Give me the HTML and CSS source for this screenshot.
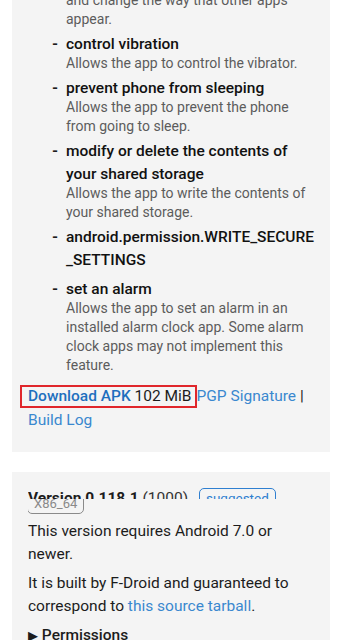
FILE: index.html
```html
<!DOCTYPE html>
<html>
<head>
<meta charset="utf-8">
<link rel="stylesheet" href="styles.css">
</head>
<body>
<div class="page">
  <section class="card card-first">
    <ul class="perms">
      <li class="perm perm-cut">
        <span class="dash"></span>
        <div class="perm-body">
          <p class="perm-desc">and change the way that other apps appear.</p>
        </div>
      </li>
      <li class="perm">
        <span class="dash">-</span>
        <div class="perm-body">
          <p class="perm-title">control vibration</p>
          <p class="perm-desc">Allows the app to control the vibrator.</p>
        </div>
      </li>
      <li class="perm">
        <span class="dash">-</span>
        <div class="perm-body">
          <p class="perm-title">prevent phone from sleeping</p>
          <p class="perm-desc">Allows the app to prevent the phone from going to sleep.</p>
        </div>
      </li>
      <li class="perm">
        <span class="dash">-</span>
        <div class="perm-body">
          <p class="perm-title">modify or delete the contents of your shared storage</p>
          <p class="perm-desc">Allows the app to write the contents of your shared storage.</p>
        </div>
      </li>
      <li class="perm perm-solo">
        <span class="dash">-</span>
        <div class="perm-body">
          <p class="perm-title break">android.permission.WRITE_SECURE_SETTINGS</p>
        </div>
      </li>
      <li class="perm">
        <span class="dash">-</span>
        <div class="perm-body">
          <p class="perm-title">set an alarm</p>
          <p class="perm-desc">Allows the app to set an alarm in an installed alarm clock app. Some alarm clock apps may not implement this feature.</p>
        </div>
      </li>
    </ul>
    <p class="downloads"><span class="apk-box"><a class="apk-link">Download APK</a> 102 MiB</span><a class="link">PGP Signature</a> | <a class="link">Build Log</a></p>
  </section>

  <section class="card">
    <div class="version-head">
      <span class="version-name">Version 0.118.1</span> <span class="version-code">(1000)</span>
      <span class="badge badge-suggested">suggested</span>
    </div>
    <div class="arch-row">
      <span class="badge badge-arch">X86_64</span>
    </div>
    <p class="text">This version requires Android 7.0 or newer.</p>
    <p class="text">It is built by F-Droid and guaranteed to correspond to <a class="link">this source tarball</a>.</p>
    <p class="text summary"><span class="tri">▶</span> Permissions</p>
  </section>
</div>
</body>
</html>
```

FILE: styles.css
```css
* { box-sizing: border-box; }
html, body { margin: 0; padding: 0; background: #ffffff; }
body {
  font-family: Roboto, "Noto Sans", sans-serif;
  color: #1c1c1c;
  width: 340px;
  height: 640px;
  overflow: hidden;
}
.page {
  display: flex;
  flex-direction: column;
  gap: 20px;
  padding: 0 10px 0 12px;
  margin-top: -21px;
}
.card {
  background: #f4f4f4;
  padding: 16px 16px 20px 16px;
}
.card-first { padding-top: 12px; }
.perms {
  list-style: none;
  margin: 0;
  padding: 0 0 0 24px;
  display: flex;
  flex-direction: column;
  gap: 4px;
}
.perm { display: flex; }
.perm-solo { margin-bottom: 2px; }
.dash {
  flex: 0 0 14px;
  font-weight: 700;
  font-size: 15.5px;
  line-height: 23px;
}
.perm-body { flex: 1; min-width: 0; }
.perm-title {
  margin: 0;
  font-size: 15.5px;
  font-weight: 500;
  line-height: 23px;
  color: #111;
}
.perm-title + .perm-desc { margin-top: -2px; }
.break { word-break: break-all; }
.perm-desc {
  margin: 0;
  font-size: 14px;
  line-height: 19px;
  color: #5c5c5c;
}
.downloads {
  margin: 9px 0 0 0;
  font-size: 15.5px;
  line-height: 24px;
  color: #1c1c1c;
}
.apk-box {
  border: 2px solid #e0262b;
  padding: 0 3px 1px 6px;
  margin-left: -8px;
}
.apk-link { color: #1e6fbe; font-weight: 500; }
.link { color: #3a88cf; }
.version-head {
  height: 11px;
  overflow: hidden;
  font-size: 15.5px;
  line-height: 16px;
  white-space: nowrap;
}
.version-name { font-weight: 700; }
.version-code { color: #333; }
.badge {
  display: inline-block;
  border-radius: 5px;
  font-size: 13.5px;
  line-height: 16px;
  padding: 1px 6px;
}
.badge-suggested {
  border: 1.5px solid #2f7fd0;
  color: #2f7fd0;
  margin-left: 7px;
}
.arch-row {
  height: 15px;
  overflow: hidden;
  display: flex;
  align-items: flex-end;
}
.badge-arch {
  border: 1.5px solid #8a8a8a;
  color: #8a8a8a;
  font-size: 13px;
  margin-left: -1px;
}
.text {
  margin: 6px 0 0 0;
  font-size: 15.5px;
  line-height: 23px;
}
.summary { font-weight: 500; }
.tri { font-size: 13px; display: inline-block; vertical-align: 0; }
```
